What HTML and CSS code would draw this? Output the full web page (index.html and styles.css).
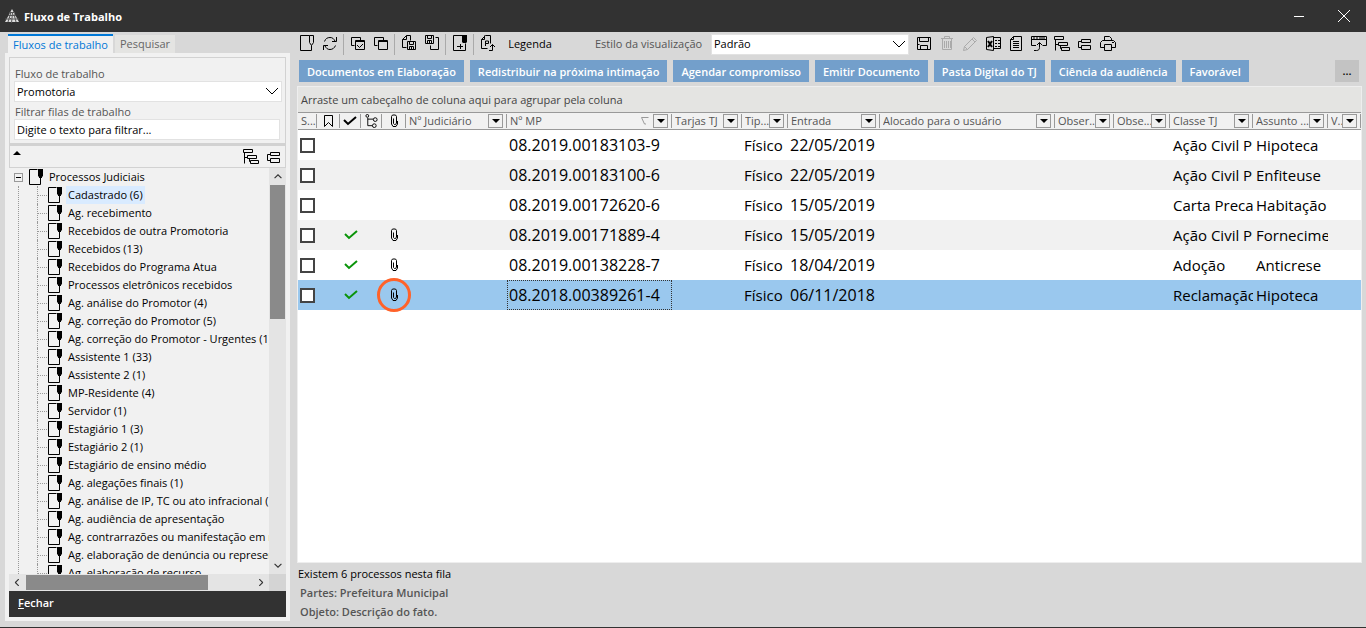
FILE: index.html
```html
<!DOCTYPE html>
<html lang="pt-BR">
<head>
<meta charset="utf-8">
<title>Fluxo de Trabalho</title>
<link rel="stylesheet" href="styles.css">
</head>
<body>
<svg class="sprite" aria-hidden="true">
  <symbol id="page-pen" viewBox="0 0 16 18"><path d="M10.500.5h-9v15h11v-5M10.500.5h4v7l-2 3-2-3z"/></symbol>
  <symbol id="refresh" viewBox="0 0 16 18"><path d="M2.500 6.500c1-3 3-4 5.500-4s3.500 1 5 3.500M14.500 2v4.500h-4.500M13.500 10.500c-1 2.500-3 4-5.500 4s-3.500-1-5-3.500M1.500 15v-4.500h4.500"/></symbol>
  <symbol id="win-check" viewBox="0 0 16 18"><path d="M4.500 10.500h-3v-8h9v3M5.500 5.500h9v9h-9zM5.500 6.500h9M7 10l2.500 2.500L13 9"/></symbol>
  <symbol id="wins" viewBox="0 0 16 18"><path d="M4.500 10.500h-3v-8h9v3M5.500 5.500h9v9h-9zM5.500 6.500h9"/></symbol>
  <symbol id="doc-save" viewBox="0 0 16 18"><path d="M5.500 12.500h-4v-8l4-4h4v5M1.500 4.500h4v-4M6.500 6.500h8v8h-8zM8.500 6.500v3h4v-3M8.500 14.500v-3h4v3M10.500 11.500v3"/></symbol>
  <symbol id="save-doc" viewBox="0 0 16 18"><path d="M1.500.5h8v8h-8zM3.500.5v3h4v-3M3.500 8.500v-3h4v3M5.500 6v2M11.500 2.500h3v12h-8v-4"/></symbol>
  <symbol id="page-plus" viewBox="0 0 16 18"><path d="M10.500.5h-9v15h12v-7M5 11.500h6M8.500 9v5"/><path class="fill" d="M10 0h5v7l-1 1h-3l-1-1z"/></symbol>
  <symbol id="page-p" viewBox="0 0 16 18"><path d="M7.500 13.500h-6v-9l4-4h5v8M1.500 4.500h3v-4M5.500 11v-5h3v2.500h-3M9 15.500h3.500v-6M10 12l2.500-2.500L15 12"/></symbol>
  <symbol id="save" viewBox="0 0 16 18"><path d="M1.500 2.500h13v12h-13zM3.500 2.500v4h9v-4M4.500 14.500v-4h7v4M1.500 9.500h2"/></symbol>
  <symbol id="trash" viewBox="0 0 16 18"><path d="M2 3.500h12M5.500 3.500v-2h5v2M3.500 3.500v11h9v-11M5.500 6v7M7.500 6v7M9.500 6v7M11.500 6v7"/></symbol>
  <symbol id="pencil" viewBox="0 0 16 18"><path d="M1.500 15.500l1-4 9-9 3 3-9 9zM10 4l3 3M2.500 11.500l3 3"/></symbol>
  <symbol id="excel" viewBox="0 0 16 18"><path d="M1.500 2.500l7-1v14l-7-1zM8.500 2.500h7v11h-7M10 5.500h2m1 0h2M10 8.500h2m1 0h2M10 11.500h2m1 0h2"/><path class="bold" d="M3 6l4 6M7 6l-4 6"/></symbol>
  <symbol id="doc" viewBox="0 0 16 18"><path d="M2.500 4.500l3-3h8v14h-11zM2.500 4.500h3v-3M5 6.500h6M5 8.500h6M5 10.500h6M5 12.500h6"/></symbol>
  <symbol id="win-arrow" viewBox="0 0 16 18"><path d="M5 10.500h-4.500v-9h15v9h-4M.5 4.500h15M2 3h2m1 0h2m1 0h6M3 15.500h2.500c2 0 3-1 3-3v-5M6 10l2.500-2.500 2.500 2.500"/></symbol>
  <symbol id="expand" viewBox="0 0 16 18"><path d="M.5 1.500h9v3h-9zM4.500 7.500h9v3h-9zM7.500 12.500h8v3h-8zM1.500 4.500v11M1.500 9.500h3M6.500 10.500v3h1"/></symbol>
  <symbol id="collapse" viewBox="0 0 16 18"><path d="M4.500 4.500h9v3h-9zM4.500 10.500h9v4h-9zM4.500 6.500h-3v6h3"/></symbol>
  <symbol id="printer" viewBox="0 0 16 18"><path d="M4.500 5.500v-4h5l2 2v2M4.500 12.500h-4v-5l2-2h11l2 2v5h-4M4.500 9.500h7v6h-7zM12 7.500h2"/></symbol>
  <symbol id="leaf" viewBox="0 0 16 18"><path d="M9.500 1.500h-8v15h11v-7"/><path class="fill" d="M10 1h5v7l-1 1v1h-3v-1l-1-1z"/></symbol>
  <symbol id="clip" viewBox="0 0 12 14"><path d="M8.500 4.500v4.500l-1 1.500h-1l-1-1v-5M3.500 4v6l1.500 2.500h3l1.500-2.500v-3M3.500 4.500v-2l1-1.500h3l1 1.500v3"/></symbol>
  <symbol id="tick" viewBox="0 0 14 10"><path d="M1 4l4 4 8-7"/></symbol>
  <symbol id="chev" viewBox="0 0 14 8"><path d="M1 1l6 6 6-6"/></symbol>
</svg>

<header class="titlebar">
  <svg class="logo" viewBox="0 0 14 14"><path class="tri" d="M7 0l7 13H0z"/><path class="grid-lines" d="M0 10h14M3 6.500h8M4 3.500h6M6 3l-3 10M7.500 4l-1 10M9 5l2 8M4 8l2 2"/></svg>
  <h1>Fluxo de Trabalho</h1>
  <button class="win-btn" aria-label="Minimizar"><svg viewBox="0 0 12 12"><path d="M1 6.500h10"/></svg></button>
  <button class="win-btn" aria-label="Fechar janela"><svg viewBox="0 0 12 12"><path d="M0 0l12 12M12 0L0 12"/></svg></button>
</header>

<div class="workspace">
  <aside class="side">
    <nav class="tabs">
      <button class="tab active">Fluxos de trabalho</button>
      <button class="tab">Pesquisar</button>
    </nav>
    <div class="panel">
      <div class="filters">
        <label for="flow">Fluxo de trabalho</label>
        <div class="select flow"><select id="flow"><option>Promotoria</option></select><svg><use href="#chev"/></svg></div>
        <label for="filter">Filtrar filas de trabalho</label>
        <input id="filter" type="text" value="Digite o texto para filtrar...">
      </div>
      <div class="tree-tools">
        <span class="up"></span>
        <button class="icon" aria-label="Expandir"><svg><use href="#expand"/></svg></button>
        <button class="icon" aria-label="Recolher"><svg><use href="#collapse"/></svg></button>
      </div>
      <div class="tree-area">
        <div class="tree">
          <div class="root"><button class="toggle" aria-label="Recolher grupo"></button><svg><use href="#leaf"/></svg><span>Processos Judiciais</span></div>
          <ul>
            <li class="current"><svg><use href="#leaf"/></svg><span>Cadastrado (6)</span></li>
            <li><svg><use href="#leaf"/></svg><span>Ag. recebimento</span></li>
            <li><svg><use href="#leaf"/></svg><span>Recebidos de outra Promotoria</span></li>
            <li><svg><use href="#leaf"/></svg><span>Recebidos (13)</span></li>
            <li><svg><use href="#leaf"/></svg><span>Recebidos do Programa Atua</span></li>
            <li><svg><use href="#leaf"/></svg><span>Processos eletrônicos recebidos</span></li>
            <li><svg><use href="#leaf"/></svg><span>Ag. análise do Promotor (4)</span></li>
            <li><svg><use href="#leaf"/></svg><span>Ag. correção do Promotor (5)</span></li>
            <li><svg><use href="#leaf"/></svg><span>Ag. correção do Promotor - Urgentes (1)</span></li>
            <li><svg><use href="#leaf"/></svg><span>Assistente 1 (33)</span></li>
            <li><svg><use href="#leaf"/></svg><span>Assistente 2 (1)</span></li>
            <li><svg><use href="#leaf"/></svg><span>MP-Residente (4)</span></li>
            <li><svg><use href="#leaf"/></svg><span>Servidor (1)</span></li>
            <li><svg><use href="#leaf"/></svg><span>Estagiário 1 (3)</span></li>
            <li><svg><use href="#leaf"/></svg><span>Estagiário 2 (1)</span></li>
            <li><svg><use href="#leaf"/></svg><span>Estagiário de ensino médio</span></li>
            <li><svg><use href="#leaf"/></svg><span>Ag. alegações finais (1)</span></li>
            <li><svg><use href="#leaf"/></svg><span>Ag. análise de IP, TC ou ato infracional (1)</span></li>
            <li><svg><use href="#leaf"/></svg><span>Ag. audiência de apresentação</span></li>
            <li><svg><use href="#leaf"/></svg><span>Ag. contrarrazões ou manifestação em recurso</span></li>
            <li><svg><use href="#leaf"/></svg><span>Ag. elaboração de denúncia ou representação</span></li>
            <li><svg><use href="#leaf"/></svg><span>Ag. elaboração de recurso</span></li>
          </ul>
        </div>
        <div class="vbar"><svg class="flip"><use href="#chev"/></svg><div class="thumb"></div><svg><use href="#chev"/></svg></div>
      </div>
      <div class="hbar"><svg class="left"><use href="#chev"/></svg><div class="thumb"></div><svg class="right"><use href="#chev"/></svg><div class="corner"></div></div>
      <button class="close"><u>F</u>echar</button>
    </div>
  </aside>

  <main class="main">
    <div class="toolbar">
      <button class="icon" aria-label="Novo"><svg><use href="#page-pen"/></svg></button>
      <button class="icon" aria-label="Atualizar"><svg><use href="#refresh"/></svg></button>
      <i></i>
      <button class="icon" aria-label="Marcar todos"><svg><use href="#win-check"/></svg></button>
      <button class="icon" aria-label="Desmarcar todos"><svg><use href="#wins"/></svg></button>
      <i></i>
      <button class="icon" aria-label="Salvar documento"><svg><use href="#doc-save"/></svg></button>
      <button class="icon" aria-label="Salvar cópia"><svg><use href="#save-doc"/></svg></button>
      <i></i>
      <button class="icon" aria-label="Adicionar"><svg><use href="#page-plus"/></svg></button>
      <i></i>
      <button class="icon" aria-label="Peticionar"><svg><use href="#page-p"/></svg></button>
      <button class="legend">Legenda</button>
      <label for="style">Estilo da visualização</label>
      <div class="select style"><select id="style"><option>Padrão</option></select><svg><use href="#chev"/></svg></div>
      <button class="icon" aria-label="Salvar"><svg><use href="#save"/></svg></button>
      <button class="icon" aria-label="Excluir" disabled><svg><use href="#trash"/></svg></button>
      <button class="icon" aria-label="Editar" disabled><svg><use href="#pencil"/></svg></button>
      <button class="icon" aria-label="Excel"><svg><use href="#excel"/></svg></button>
      <button class="icon" aria-label="Texto"><svg><use href="#doc"/></svg></button>
      <button class="icon" aria-label="Exportar"><svg><use href="#win-arrow"/></svg></button>
      <button class="icon" aria-label="Expandir grupos"><svg><use href="#expand"/></svg></button>
      <button class="icon" aria-label="Recolher grupos"><svg><use href="#collapse"/></svg></button>
      <button class="icon" aria-label="Imprimir"><svg><use href="#printer"/></svg></button>
    </div>
    <div class="actions">
      <button>Documentos em Elaboração</button>
      <button>Redistribuir na próxima intimação</button>
      <button>Agendar compromisso</button>
      <button>Emitir Documento</button>
      <button>Pasta Digital do TJ</button>
      <button>Ciência da audiência</button>
      <button>Favorável</button>
      <button class="more">...</button>
    </div>
    <section class="grid">
      <div class="group-hint">Arraste um cabeçalho de coluna aqui para agrupar pela coluna</div>
      <table>
        <colgroup><col class="c-sel"><col class="c-mark"><col class="c-ok"><col class="c-link"><col class="c-clip"><col class="c-jud"><col class="c-mp"><col class="c-tag"><col class="c-type"><col class="c-date"><col><col class="c-obs1"><col class="c-obs2"><col class="c-class"><col class="c-subj"><col class="c-v"></colgroup>
        <thead>
          <tr>
            <th><div>S...</div></th>
            <th class="pic"><div><svg class="book" viewBox="0 0 9 12"><path d="M.5.5h8v11l-4-4-4 4z"/></svg></div></th>
            <th class="pic"><div><svg class="tick"><use href="#tick"/></svg></div></th>
            <th class="pic"><div><svg class="nodes" viewBox="0 0 13 15"><circle cx="2" cy="2" r="1.500"/><circle cx="10.500" cy="6" r="2"/><circle cx="9.500" cy="12.500" r="2"/><path d="M2.500 4v8.500h5M2.500 5.500h6"/></svg></div></th>
            <th class="pic"><div><svg class="clip"><use href="#clip"/></svg></div></th>
            <th><div><span>Nº Judiciário</span><button aria-label="Filtrar"></button></div></th>
            <th><div><span>Nº MP</span><svg class="sort" viewBox="0 0 8 8"><path d="M.5.5h7M.5.5l3 6.500h1.500"/></svg><button aria-label="Filtrar"></button></div></th>
            <th><div><span>Tarjas TJ</span><button aria-label="Filtrar"></button></div></th>
            <th><div><span>Tip...</span><button aria-label="Filtrar"></button></div></th>
            <th><div><span>Entrada</span><button aria-label="Filtrar"></button></div></th>
            <th><div><span>Alocado para o usuário</span><button aria-label="Filtrar"></button></div></th>
            <th><div><span>Obser...</span><button aria-label="Filtrar"></button></div></th>
            <th><div><span>Obse...</span><button aria-label="Filtrar"></button></div></th>
            <th><div><span>Classe TJ</span><button aria-label="Filtrar"></button></div></th>
            <th><div><span>Assunto ...</span><button aria-label="Filtrar"></button></div></th>
            <th><div><span>V...</span><button aria-label="Filtrar"></button></div></th>
          </tr>
        </thead>
        <tbody>
          <tr><td><input type="checkbox" aria-label="Selecionar"></td><td></td><td></td><td></td><td></td><td></td><td>08.2019.00183103-9</td><td></td><td>Físico</td><td>22/05/2019</td><td></td><td></td><td></td><td>Ação Civil Pública</td><td>Hipoteca</td><td></td></tr>
          <tr><td><input type="checkbox" aria-label="Selecionar"></td><td></td><td></td><td></td><td></td><td></td><td>08.2019.00183100-6</td><td></td><td>Físico</td><td>22/05/2019</td><td></td><td></td><td></td><td>Ação Civil Pública</td><td>Enfiteuse</td><td></td></tr>
          <tr><td><input type="checkbox" aria-label="Selecionar"></td><td></td><td></td><td></td><td></td><td></td><td>08.2019.00172620-6</td><td></td><td>Físico</td><td>15/05/2019</td><td></td><td></td><td></td><td>Carta Precatória</td><td>Habitação</td><td></td></tr>
          <tr><td><input type="checkbox" aria-label="Selecionar"></td><td></td><td class="pic"><svg class="tick green"><use href="#tick"/></svg></td><td></td><td class="pic"><svg class="clip"><use href="#clip"/></svg></td><td></td><td>08.2019.00171889-4</td><td></td><td>Físico</td><td>15/05/2019</td><td></td><td></td><td></td><td>Ação Civil Pública</td><td>Fornecimento</td><td></td></tr>
          <tr><td><input type="checkbox" aria-label="Selecionar"></td><td></td><td class="pic"><svg class="tick green"><use href="#tick"/></svg></td><td></td><td class="pic"><svg class="clip"><use href="#clip"/></svg></td><td></td><td>08.2019.00138228-7</td><td></td><td>Físico</td><td>18/04/2019</td><td></td><td></td><td></td><td>Adoção</td><td>Anticrese</td><td></td></tr>
          <tr class="selected"><td><input type="checkbox" aria-label="Selecionar"></td><td></td><td class="pic"><svg class="tick green"><use href="#tick"/></svg></td><td></td><td class="pic ringed"><svg class="clip"><use href="#clip"/></svg></td><td></td><td class="focus">08.2018.00389261-4</td><td></td><td>Físico</td><td>06/11/2018</td><td></td><td></td><td></td><td>Reclamação</td><td>Hipoteca</td><td></td></tr>
        </tbody>
      </table>
    </section>
    <footer class="status">
      <p class="count">Existem 6 processos nesta fila</p>
      <p>Partes: Prefeitura Municipal</p>
      <p>Objeto: Descrição do fato.</p>
    </footer>
  </main>
</div>
</body>
</html>
```

FILE: styles.css
```css
* { box-sizing: border-box; }
body { margin: 0; height: 100vh; display: flex; flex-direction: column; overflow: hidden; background: #d8d8d8; border-bottom: 1px solid #323232; font: 11px/16px "Open Sans", "Noto Sans", sans-serif; color: #000; }
button, input, select { font: inherit; color: inherit; border: 0; border-radius: 0; margin: 0; padding: 0; background: none; }
svg { display: block; flex: none; fill: none; stroke: #000; }
.sprite { position: absolute; width: 0; height: 0; }
.fill { fill: #000; stroke: none; }
.bold { stroke-width: 2; }

.titlebar { flex: none; height: 32px; display: flex; align-items: center; background: #323232; color: #fff; padding-left: 5px; }
.titlebar h1 { flex: 1; margin: 2px 0 0 5px; font-size: 11px; line-height: 16px; font-weight: 700; }
.logo { width: 14px; height: 14px; }
.tri { fill: #ddd; stroke: none; }
.grid-lines { stroke: #555; stroke-width: 1; }
.win-btn { width: 45px; height: 32px; display: grid; place-items: center; }
.win-btn svg { width: 12px; height: 12px; stroke: #fff; overflow: visible; }

.workspace { flex: 1; min-height: 0; display: flex; gap: 7px; padding: 2px 4px 6px 5px; }
.side { flex: none; width: 285px; display: flex; flex-direction: column; }
.tabs { display: flex; align-items: flex-end; gap: 2px; padding-left: 3px; }
.tab { height: 18px; padding: 0 5px; background: #e4e4e2; color: #666; line-height: 18px; white-space: nowrap; }
.tab.active { height: 19px; border-top: 2px solid #0078d7; background: #f1f1f1; color: #0078d7; line-height: 14px; }
.panel { flex: 1; min-height: 0; display: flex; flex-direction: column; background: #f1f1f1; padding: 4px; }
.filters { border: 1px solid #d2d2d2; padding: 9px 3px 3px 4px; display: flex; flex-direction: column; color: #555; }
.filters label { line-height: 14px; padding-left: 1px; }
.select { position: relative; background: #fff; border: 1px solid #e2e2e2; color: #000; }
.select select { appearance: none; width: 100%; height: 100%; padding-left: 2px; outline: 0; }
.select svg { position: absolute; right: 2px; top: 5px; width: 14px; height: 8px; pointer-events: none; }
.flow { height: 21px; margin-bottom: 3px; }
#filter { height: 21px; margin-right: 2px; background: #fff; border: 1px solid #e2e2e2; color: #000; padding-left: 2px; }
.tree-tools { flex: none; height: 24px; display: flex; align-items: center; border: 1px solid #d2d2d2; border-top-width: 2px; padding: 0 0 0 3px; }
.up { margin: 0 auto 8px 0; border: 4px solid transparent; border-top: 0; border-bottom-color: #000; }
.icon { flex: none; width: 23px; height: 20px; display: grid; place-items: center; }
.icon svg { width: 16px; height: 18px; }
.icon:disabled svg { stroke: #aaa; }
.tree-area { flex: 1; min-height: 0; display: flex; }
.tree { flex: 1; min-width: 0; overflow: hidden; white-space: nowrap; }
.root { height: 18px; display: flex; align-items: center; padding-left: 5px; }
.root svg { margin-left: 5px; width: 16px; height: 18px; }
.root span { padding-left: 5px; }
.toggle { width: 9px; height: 9px; border: 1px solid #999; background: linear-gradient(#000, #000) center / 5px 1px no-repeat; }
.tree ul { list-style: none; margin: 0 0 0 9px; padding: 0 0 0 18px; border-left: 1px dotted #999; }
.tree li { height: 18px; display: flex; align-items: center; border-left: 1px dotted #999; }
.tree li::before { content: ""; flex: none; width: 9px; border-top: 1px dotted #999; }
.tree li svg { width: 16px; height: 18px; }
.tree li span { flex: none; margin-left: 3px; padding: 0 2px; line-height: 18px; }
.current span { background: #d9ebff; }
.vbar { flex: none; width: 17px; display: flex; flex-direction: column; align-items: center; background: #e4e4e4; padding: 0 1px; }
.vbar svg, .hbar svg { width: 8px; height: 5px; stroke: #333; stroke-width: 2; margin: 6px 0; }
.vbar .thumb { width: 15px; height: 33%; margin-bottom: auto; background: #8a8a8a; }
.flip { transform: rotate(180deg); }
.hbar { flex: none; height: 17px; display: flex; align-items: center; background: #e4e4e4; }
.hbar svg.left { transform: rotate(90deg); margin: 0 5px 0 4px; }
.hbar svg.right { transform: rotate(-90deg); margin: 0 4px 0 auto; }
.hbar .thumb { width: 182px; height: 15px; background: #8a8a8a; }
.corner { width: 17px; height: 17px; background: #d4d4d4; }
.close { flex: none; height: 26px; background: #323232; color: #fff; font-weight: 600; text-align: left; padding: 0 9px 2px; }

.main { flex: 1; min-width: 0; display: flex; flex-direction: column; }
.toolbar { flex: none; height: 20px; display: flex; align-items: center; }
.toolbar .icon:first-child { margin-left: -2px; }
.toolbar i { width: 1px; height: 21px; margin: 0 2px; background: #aaa; }
.legend { width: 62px; text-align: center; margin-right: 34px; }
.toolbar label { width: 107px; color: #555; margin-right: 9px; white-space: nowrap; }
.style { width: 198px; height: 21px; margin-right: 3px; flex: none; }
.actions { flex: none; display: flex; gap: 6px; margin: 6px 0 4px; padding: 0 3px 0 2px; }
.actions button { height: 22px; padding: 1px 8px 0; background: #739fcb; color: #fff; font-weight: 600; white-space: nowrap; }
.actions .more { margin-left: auto; width: 24px; padding: 0; background: #c3c3c3; color: #000; }
.grid { flex: 1; min-height: 0; background: #fff; border: 1px solid #eee; overflow: hidden; }
.group-hint { height: 25px; background: #e4e4e2; color: #444; line-height: 26px; padding-left: 3px; }
table { width: 100%; table-layout: fixed; border-collapse: separate; border-spacing: 0; }
.c-sel { width: 19px; } .c-mark { width: 23px; } .c-ok { width: 21px; } .c-link { width: 21px; } .c-clip { width: 24px; }
.c-jud { width: 101px; } .c-mp { width: 165px; } .c-tag { width: 70px; } .c-type { width: 46px; } .c-date { width: 92px; }
.c-obs1 { width: 59px; } .c-obs2 { width: 56px; } .c-class { width: 83px; } .c-subj { width: 75px; } .c-v { width: 33px; }
th { height: 18px; padding: 1px 0; background: #f1f1f1; border: solid #999; border-width: 1px 0; color: #555; font-weight: 400; text-align: left; }
th div { height: 14px; display: flex; align-items: center; padding: 0 3px; line-height: 14px; border-right: 1px solid #999; white-space: nowrap; overflow: hidden; }
th span { flex: 1; min-width: 0; overflow: hidden; }
th button { flex: none; width: 15px; height: 14px; border: 1px solid #999; display: grid; place-items: center; }
th button::before { content: ""; border: 4px solid transparent; border-bottom: 0; border-top-color: #000; }
th.pic div { justify-content: center; padding: 0; }
.book { width: 9px; height: 12px; }
.nodes { width: 13px; height: 14px; }
.sort { width: 8px; height: 8px; margin-right: 4px; stroke: #999; }
.tick { width: 14px; height: 10px; stroke-width: 2; }
.green { stroke: #0a940a; }
.clip { width: 12px; height: 14px; }
td { height: 30px; padding: 0 0 0 2px; font-size: 15px; line-height: 28px; white-space: nowrap; overflow: hidden; }
td:nth-child(7), td:nth-child(10) { font-size: 16px; }
td:nth-child(14), td:nth-child(15) { padding-left: 3px; }
td.pic { padding: 0; }
td.pic svg { margin: 0 auto; }
tbody tr:nth-child(even) { background: #f1f1f1; }
tbody tr.selected { background: #9ac8ee; }
td input { appearance: none; display: block; width: 15px; height: 15px; border: 2px solid #444; background: #fff; }
.ringed { position: relative; overflow: visible; }
.ringed::after { content: ""; position: absolute; inset: -2px -5px; border: 3px solid #ff6229; border-radius: 50%; }
.focus { outline: 1px dotted #333; outline-offset: -1px; }
.status { flex: none; padding: 1px 3px 0; font-weight: 600; color: #555; }
.status p { margin: 0; line-height: 19px; }
.status .count { font-weight: 400; color: #000; margin-left: -2px; }
```
